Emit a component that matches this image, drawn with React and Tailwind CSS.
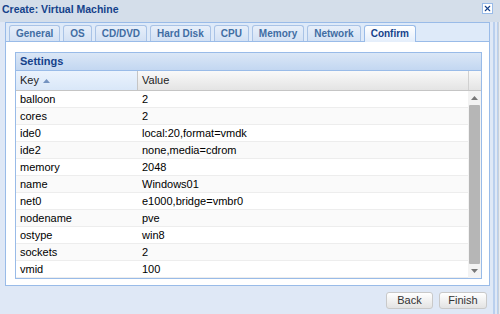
import { X } from "lucide-react";

const tabs = ["General", "OS", "CD/DVD", "Hard Disk", "CPU", "Memory", "Network", "Confirm"];

const rows = [
  ["balloon", "2"],
  ["cores", "2"],
  ["ide0", "local:20,format=vmdk"],
  ["ide2", "none,media=cdrom"],
  ["memory", "2048"],
  ["name", "Windows01"],
  ["net0", "e1000,bridge=vmbr0"],
  ["nodename", "pve"],
  ["ostype", "win8"],
  ["sockets", "2"],
  ["vmid", "100"],
];

function Tab({ label, active }) {
  return (
    <div
      className={
        "h-[16px] px-[6px] flex items-center rounded-t-[3px] border border-b-0 text-[10px] font-bold leading-none " +
        (active
          ? "bg-gradient-to-b from-white to-[#e4eefb] border-[#99bbe8] text-[#15428b] h-[17px] -mb-px"
          : "bg-gradient-to-b from-[#e7effa] to-[#d3e1f4] border-[#a9c3e6] text-[#416da3]")
      }
    >
      {label}
    </div>
  );
}

export default function App() {
  return (
    <div className="w-[500px] h-[314px] flex flex-col bg-[#dfe8f6] font-['Liberation_Sans',Arial,sans-serif] text-[11px] overflow-hidden relative">
      {/* title */}
      <div className="h-[22px] shrink-0 bg-[#d4deea] pl-[2px] pt-[1px] relative">
        <span className="text-[10.5px] leading-[13px] font-bold text-[#15428b]">Create: Virtual Machine</span>
        <button className="absolute right-[7px] top-[3px] w-[11px] h-[11px] bg-white border border-[#99bbe8] flex items-center justify-center">
          <X size={9} strokeWidth={3} className="text-[#15428b]" />
        </button>
      </div>

      <div className="flex-1 flex">
        <div className="w-[493px] flex flex-col pl-[5px] pr-[3px]">
          {/* tab panel */}
          <div className="h-[264px] border border-[#99bbe8] flex flex-col bg-white">
            <div className="h-[19px] shrink-0 bg-[#deeaf9] border-b border-[#99bbe8] flex items-end gap-[3px] pl-[3px]">
              {tabs.map((t) => (
                <Tab key={t} label={t} active={t === "Confirm"} />
              ))}
            </div>
            <div className="flex-1 pl-[9px] pr-[7px] pt-[10px] pb-[7px] flex">
              {/* grid */}
              <div className="flex-1 border border-[#99bbe8] flex flex-col">
                <div className="h-[18px] shrink-0 bg-gradient-to-b from-[#dbe7f6] to-[#c3d7f1] border-b border-[#99bbe8] flex items-center pl-[4px]">
                  <span className="font-bold text-[11px] text-[#15428b]">Settings</span>
                </div>
                <div className="h-[20px] shrink-0 flex border-b border-[#c5c5c5] bg-gradient-to-b from-[#f9f9f9] to-[#e4e4e4]">
                  <div className="w-[122px] border-r border-[#c5c5c5] bg-gradient-to-b from-[#ebf3fd] to-[#d9e7f8] flex items-center pl-[4px] gap-[4px] text-[#222]">
                    Key
                    <svg width="7" height="4" viewBox="0 0 7 4">
                      <path d="M0 4 L3.5 0 L7 4 Z" fill="#7493c0" />
                    </svg>
                  </div>
                  <div className="flex-1 flex items-center pl-[4px] text-[#222]">Value</div>
                  <div className="w-[13px] border-l border-[#d0d0d0]" />
                </div>
                <div className="flex-1 flex">
                  <div className="flex-1 flex flex-col">
                    {rows.map(([k, v], i) => (
                      <div
                        key={k}
                        className={
                          "h-[17px] flex items-center border-b border-[#ededed] text-black " +
                          (i % 2 ? "bg-[#fafafa]" : "bg-white")
                        }
                      >
                        <div className="w-[122px] pl-[4px]">{k}</div>
                        <div className="flex-1 pl-[4px]">{v}</div>
                      </div>
                    ))}
                  </div>
                  <div className="w-[13px] bg-[#f3f3f3] flex flex-col items-center pt-[5px] pb-[5px]">
                    <svg width="7" height="4" viewBox="0 0 7 4">
                      <path d="M0 4 L3.5 0 L7 4 Z" fill="#777" />
                    </svg>
                    <div className="w-[11px] flex-1 bg-[#b6b6b6] mt-[5px] mb-[5px] rounded-[1px]" />
                    <svg width="7" height="4" viewBox="0 0 7 4">
                      <path d="M0 0 L7 0 L3.5 4 Z" fill="#777" />
                    </svg>
                  </div>
                </div>
              </div>
            </div>
          </div>
          {/* buttons */}
          <div className="flex justify-end gap-[6px] pt-[6px] pr-[3px]">
            <button className="w-[47px] h-[17px] rounded-[3px] border border-[#c9c9c9] bg-gradient-to-b from-white to-[#e3e3e3] text-[#333] text-[11px] leading-none">
              Back
            </button>
            <button className="w-[48px] h-[17px] rounded-[3px] border border-[#c9c9c9] bg-gradient-to-b from-white to-[#e3e3e3] text-[#333] text-[11px] leading-none">
              Finish
            </button>
          </div>
        </div>
        {/* window frame edge */}
        <div className="w-[7px] flex">
          <div className="w-[2px] bg-[#b9cfee]" />
          <div className="w-[2px] bg-[#dfe8f6]" />
          <div className="w-[1px] bg-[#b9cfee]" />
          <div className="flex-1 bg-[#e6ebf2] border-l border-[#c8d0da]" />
        </div>
      </div>
    </div>
  );
}
